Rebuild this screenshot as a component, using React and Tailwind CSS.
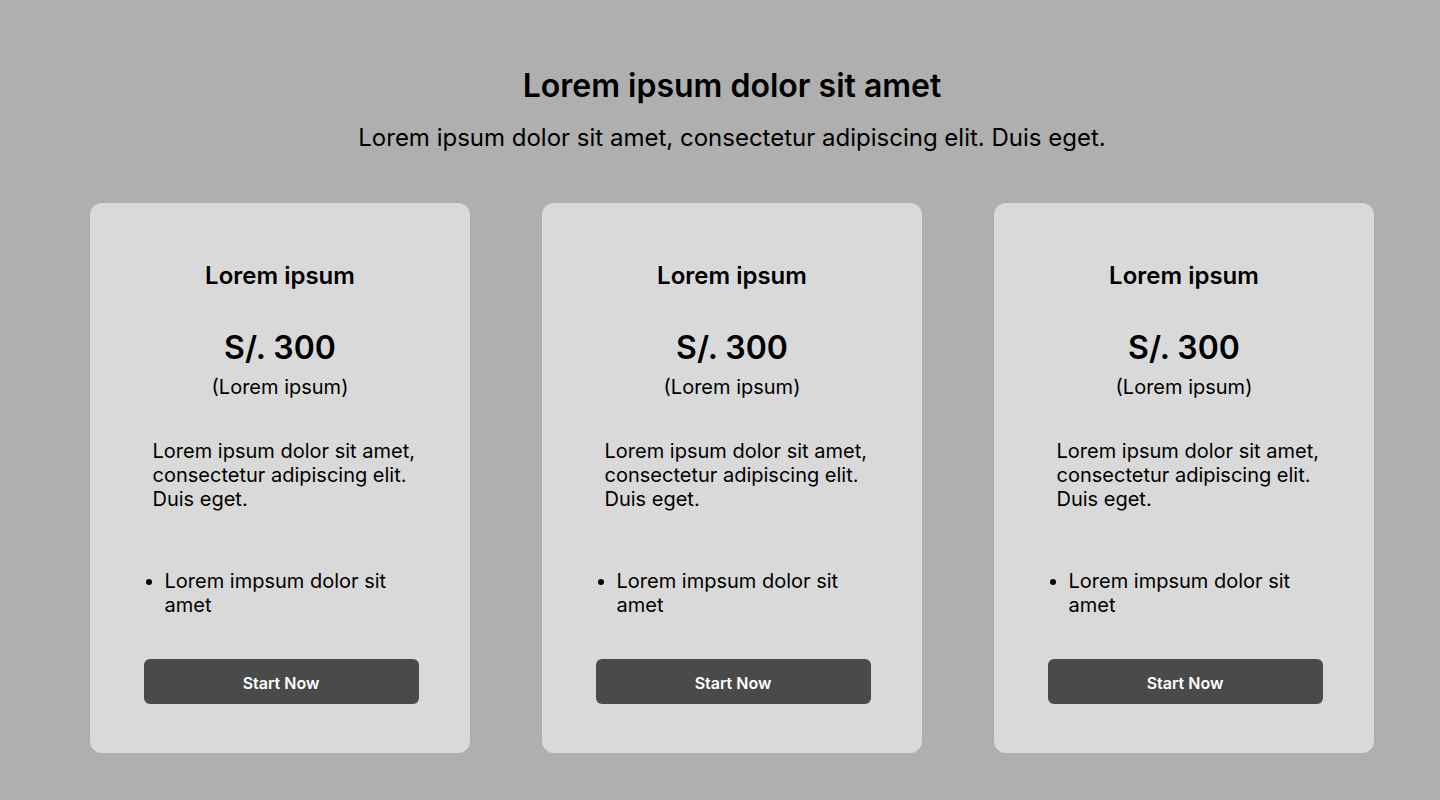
import React from "react";

function Card() {
  return (
    <div className="w-[380px] h-[550px] rounded-[12px] bg-[#d9d9d9] flex flex-col items-center pt-[58px] text-black">
      <h3 className="text-[24px] leading-[29px] font-semibold">Lorem ipsum</h3>
      <div className="mt-[38px] text-[32px] leading-[39px] font-semibold">S/. 300</div>
      <div className="mt-[8px] text-[20px] leading-[24px]">(Lorem ipsum)</div>
      <p className="mt-[40px] w-[275px] ml-[20px] text-[20px] leading-[24px]">
        Lorem ipsum dolor sit amet, consectetur adipiscing elit. Duis eget.
      </p>
      <ul className="mt-[58px] w-[275px] ml-[2px] list-disc pl-[21px] text-[20px] leading-[24px]">
        <li>Lorem impsum dolor sit amet</li>
      </ul>
      <button className="mt-[42px] w-[275px] ml-[2px] h-[45px] pt-[2px] rounded-[6px] bg-[#4a4a4a] text-white text-[16px] font-semibold">
        Start Now
      </button>
    </div>
  );
}

export default function App() {
  return (
    <div
      className="min-h-[800px] w-full bg-[#afafaf] pl-[24px] flex flex-col items-center"
      style={{ fontFamily: "Inter, 'Noto Sans', sans-serif" }}
    >
      <h1 className="mt-[66px] text-[32px] leading-[40px] font-semibold text-black">
        Lorem ipsum dolor sit amet
      </h1>
      <p className="mt-[17px] text-[24px] leading-[29px] text-black">
        Lorem ipsum dolor sit amet, consectetur adipiscing elit. Duis eget.
      </p>
      <div className="mt-[51px] flex gap-[72px]">
        <Card />
        <Card />
        <Card />
      </div>
    </div>
  );
}
